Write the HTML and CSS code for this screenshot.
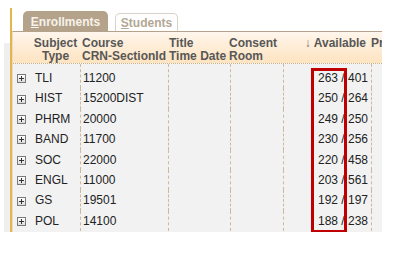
FILE: index.html
```html
<!DOCTYPE html>
<html>
<head>
<meta charset="utf-8">
<link rel="stylesheet" href="styles.css">
</head>
<body>
<div class="page">
  <div class="strip"></div>
  <div class="frame">
    <div class="tabs">
      <div class="tab tab-active"><u>E</u>nrollments</div>
      <div class="tab tab-idle"><u>S</u>tudents</div>
    </div>
    <div class="panel">
      <div class="head grid">
        <div></div>
        <div class="h h-subject">Subject<br>Type</div>
        <div class="h h-course">Course<br>CRN-SectionId</div>
        <div class="h h-title">Title<br>Time Date</div>
        <div class="h h-consent">Consent<br>Room</div>
        <div class="h h-avail"><span class="arrow">↓</span> Available</div>
        <div class="h h-pr">Pr</div>
      </div>
      <div class="body">
        <div class="row grid first"><div class="c c-icon"><span class="plus"></span></div><div class="c c-subj">TLI</div><div class="c c-course d">11200</div><div class="c d"></div><div class="c d"></div><div class="c c-avail d">263 / 401</div><div class="c d"></div></div>
        <div class="row grid"><div class="c c-icon"><span class="plus"></span></div><div class="c c-subj">HIST</div><div class="c c-course d">15200DIST</div><div class="c d"></div><div class="c d"></div><div class="c c-avail d">250 / 264</div><div class="c d"></div></div>
        <div class="row grid"><div class="c c-icon"><span class="plus"></span></div><div class="c c-subj">PHRM</div><div class="c c-course d">20000</div><div class="c d"></div><div class="c d"></div><div class="c c-avail d">249 / 250</div><div class="c d"></div></div>
        <div class="row grid"><div class="c c-icon"><span class="plus"></span></div><div class="c c-subj">BAND</div><div class="c c-course d">11700</div><div class="c d"></div><div class="c d"></div><div class="c c-avail d">230 / 256</div><div class="c d"></div></div>
        <div class="row grid"><div class="c c-icon"><span class="plus"></span></div><div class="c c-subj">SOC</div><div class="c c-course d">22000</div><div class="c d"></div><div class="c d"></div><div class="c c-avail d">220 / 458</div><div class="c d"></div></div>
        <div class="row grid"><div class="c c-icon"><span class="plus"></span></div><div class="c c-subj">ENGL</div><div class="c c-course d">11000</div><div class="c d"></div><div class="c d"></div><div class="c c-avail d">203 / 561</div><div class="c d"></div></div>
        <div class="row grid"><div class="c c-icon"><span class="plus"></span></div><div class="c c-subj">GS</div><div class="c c-course d">19501</div><div class="c d"></div><div class="c d"></div><div class="c c-avail d">192 / 197</div><div class="c d"></div></div>
        <div class="row grid"><div class="c c-icon"><span class="plus"></span></div><div class="c c-subj">POL</div><div class="c c-course d">14100</div><div class="c d"></div><div class="c d"></div><div class="c c-avail d">188 / 238</div><div class="c d"></div></div>
      </div>
    </div>
  </div>
  <div class="highlight"></div>
</div>
</body>
</html>
```
FILE: styles.css
```css
html, body {
  margin: 0;
  padding: 0;
  background: #ffffff;
  font-family: "Liberation Sans", Arial, sans-serif;
}
.page {
  position: relative;
  display: flex;
  align-items: flex-start;
  padding: 8px 0 0 4px;
}
.strip {
  width: 6px;
  height: 189px;
  margin-top: 35px;
  background: #efefef;
}
.frame {
  width: 370px;
  height: 224px;
  border-left: 2px solid #e3b54c;
  display: flex;
  flex-direction: column;
}
.tabs {
  height: 23px;
  display: flex;
  align-items: flex-end;
  gap: 7px;
  padding-left: 11px;
}
.tab {
  font-size: 12px;
  font-weight: bold;
  text-align: center;
  border-radius: 5px 5px 0 0;
  box-sizing: border-box;
}
.tab u { text-decoration: underline; text-underline-offset: 1px; }
.tab-active {
  width: 85px;
  height: 20px;
  padding-top: 2px;
  line-height: 18px;
  background: #b4a28a;
  color: #f7f2ea;
}
.tab-idle {
  width: 63px;
  height: 18px;
  line-height: 18px;
  background: #ffffff;
  border: 1px solid #d8d2ca;
  border-bottom: none;
  color: #b2a794;
}
.panel {
  flex: 1;
  border-top: 1px solid #b4a28a;
  border-left: 1px solid #eadcc8;
  overflow: hidden;
  display: flex;
  flex-direction: column;
}
.grid {
  display: grid;
  grid-template-columns: 18px 49px 88px 62px 53px 88px 1fr;
}
.head {
  height: 31px;
  background: linear-gradient(#fff6ec, #fde3c0);
  border-bottom: 1px dotted #c6b193;
}
.h {
  padding-top: 5px;
  font-size: 12px;
  font-weight: bold;
  line-height: 13px;
  color: #575757;
  white-space: nowrap;
}
.h-subject { text-align: center; }
.h-course { padding-left: 2px; }
.h-title { padding-left: 1px; }
.h-consent { margin-left: -1px; }
.h-avail { text-align: right; padding-right: 5px; }
.arrow { font-weight: normal; color: #777; }
.h-pr { overflow: hidden; }
.body {
  flex: 1;
  background: #f2f2f2;
}
.row { height: 20.4px; }
.row.first { height: 24.4px; }
.c {
  font-size: 12px;
  line-height: 20px;
  color: #222;
  white-space: nowrap;
  box-sizing: border-box;
}
.row.first .c { padding-top: 4px; }
.d { border-left: 1px dashed #cdb99e; }
.c-icon {
  display: flex;
  align-items: center;
  padding-left: 4px;
}
.row.first .c-icon { padding-top: 4px; }
.plus {
  position: relative;
  width: 9px;
  height: 9px;
  box-sizing: border-box;
  border: 1px solid #7a7a7a;
  background: linear-gradient(#ffffff, #dcdcdc);
  margin-top: 1px;
}
.plus::before, .plus::after {
  content: "";
  position: absolute;
  background: #333;
}
.plus::before { left: 1px; top: 3px; width: 5px; height: 1px; }
.plus::after { left: 3px; top: 1px; width: 1px; height: 5px; }
.c-subj { padding-left: 4px; }
.c-course { padding-left: 2px; }
.c-avail { text-align: right; padding-right: 3px; }
.highlight {
  position: absolute;
  left: 311px;
  top: 68px;
  width: 36px;
  height: 165px;
  box-sizing: border-box;
  border: 3px solid #c00000;
}
```
